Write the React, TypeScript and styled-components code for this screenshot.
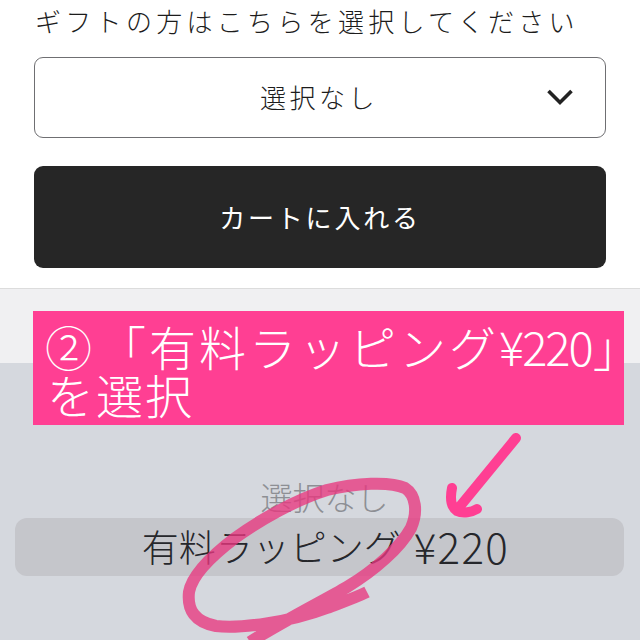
import React from "react";
import styled, { createGlobalStyle } from "styled-components";

const jp = `"Noto Sans CJK JP", "Noto Sans", sans-serif`;

const GlobalStyle = createGlobalStyle`
  html, body {
    margin: 0;
    padding: 0;
    background: #fff;
  }
  * {
    box-sizing: border-box;
  }
`;

const Page = styled.div`
  position: relative;
  width: 640px;
  height: 640px;
  overflow: hidden;
  display: flex;
  flex-direction: column;
  font-family: ${jp};
  color: #1c1c1c;
`;

const ProductForm = styled.div`
  height: 289px;
  padding: 3px 34px 0;
  display: flex;
  flex-direction: column;
  background: #fff;
  border-bottom: 1px solid #dcdcdc;
`;

const FieldLabel = styled.div`
  height: 54px;
  padding-left: 1px;
  font-size: 26px;
  font-weight: 300;
  line-height: 36px;
  letter-spacing: 4.3px;
  white-space: nowrap;
`;

const SelectBox = styled.div`
  position: relative;
  height: 81px;
  display: flex;
  align-items: center;
  justify-content: center;
  border: 1.5px solid #6f6f72;
  border-radius: 9px;
  font-size: 26px;
  font-weight: 300;
  letter-spacing: 3.5px;
  padding-right: 2px;
  padding-bottom: 2px;
`;

const Chevron = styled.svg`
  position: absolute;
  right: 31px;
  top: 30px;
  width: 28px;
  height: 18px;
`;

const CartButton = styled.div`
  margin-top: 28px;
  height: 102px;
  display: flex;
  align-items: center;
  justify-content: center;
  background: #262626;
  border-radius: 9px;
  color: #fff;
  font-size: 26px;
  font-weight: 400;
  letter-spacing: 2.8px;
  padding-bottom: 2px;
`;

const Sheet = styled.div`
  position: relative;
  flex: 1;
  display: flex;
  flex-direction: column;
`;

const SheetTop = styled.div`
  height: 74px;
  background: #f0f0f2;
`;

const PickerArea = styled.div`
  flex: 1;
  background: #d5d8de;
  padding: 110px 16px 0 15px;
  display: flex;
  flex-direction: column;
  align-items: stretch;
`;

const PickerOption = styled.div<{ $selected?: boolean }>`
  display: flex;
  align-items: center;
  justify-content: center;
  height: ${(p) => (p.$selected ? "58px" : "45px")};
  font-size: ${(p) => (p.$selected ? "37px" : "32px")};
  font-weight: 300;
  white-space: nowrap;
  border-radius: 12px;
  color: ${(p) => (p.$selected ? "#26272b" : "#8d8f94")};
  background: ${(p) => (p.$selected ? "#c5c6cb" : "transparent")};
  padding-left: ${(p) => (p.$selected ? "12px" : "10px")};
  padding-bottom: ${(p) => (p.$selected ? "3px" : "0")};
`;

const Price = styled.span`
  margin-left: 13px;
  font-size: 42px;
  letter-spacing: 1.4px;
`;

const Banner = styled.div`
  position: absolute;
  left: 33px;
  top: 22px;
  width: 591px;
  height: 114px;
  padding: 11px 0 0 12px;
  background: #ff3f93;
  color: #fff;
  font-size: 47px;
  font-weight: 300;
  line-height: 48px;
  white-space: nowrap;
`;

const BannerLine = styled.div<{ $indent?: number; $spacing: number }>`
  display: flex;
  align-items: center;
  letter-spacing: ${(p) => p.$spacing}px;
  padding-left: ${(p) => p.$indent ?? 0}px;
`;

const CircledNumber = styled.span`
  margin-right: 4px;
`;

const NarrowText = styled.span`
  letter-spacing: -2px;
  margin-right: 2px;
`;

const ClosingBracket = styled.span`
  font-feature-settings: "palt";
`;

const Markup = styled.svg`
  position: absolute;
  inset: 0;
  width: 640px;
  height: 640px;
  pointer-events: none;
`;

export default function App() {
  return (
    <Page>
      <GlobalStyle />
      <ProductForm>
        <FieldLabel>ギフトの方はこちらを選択してください</FieldLabel>
        <SelectBox>
          選択なし
          <Chevron viewBox="0 0 28 18">
            <path
              d="M2.5 3 L14 14.5 L25.5 3"
              fill="none"
              stroke="#222"
              strokeWidth="3.6"
            />
          </Chevron>
        </SelectBox>
        <CartButton>カートに入れる</CartButton>
      </ProductForm>
      <Sheet>
        <SheetTop />
        <PickerArea>
          <PickerOption>選択なし</PickerOption>
          <PickerOption $selected>
            有料ラッピング<Price>¥220</Price>
          </PickerOption>
        </PickerArea>
        <Banner>
          <BannerLine $spacing={3}>
            <CircledNumber>②</CircledNumber>「有料ラッピング
            <NarrowText>¥220</NarrowText>
            <ClosingBracket>」</ClosingBracket>
          </BannerLine>
          <BannerLine $indent={2} $spacing={2}>
            を選択
          </BannerLine>
        </Banner>
      </Sheet>
      <Markup viewBox="0 0 640 640">
        <path
          d="M250 642 C285 620 325 600 347 587 C375 570 400 548 411 528 C418 512 416 495 405 488 C390 481 355 483 327 490 C295 500 260 520 235 538 C210 557 192 575 189 592 C187 610 195 622 216 626 C240 629 290 622 327 608 C340 603 355 598 367 592"
          fill="none"
          stroke="#e8377f"
          strokeOpacity="0.78"
          strokeWidth="12"
          strokeLinecap="butt"
        />
        <path
          d="M516 438 L457 510 M452 488 C450 498 451 507 457 511 C463 514 472 512 477 509"
          fill="none"
          stroke="#ff3f93"
          strokeWidth="10"
          strokeLinecap="round"
          strokeLinejoin="round"
        />
      </Markup>
    </Page>
  );
}
